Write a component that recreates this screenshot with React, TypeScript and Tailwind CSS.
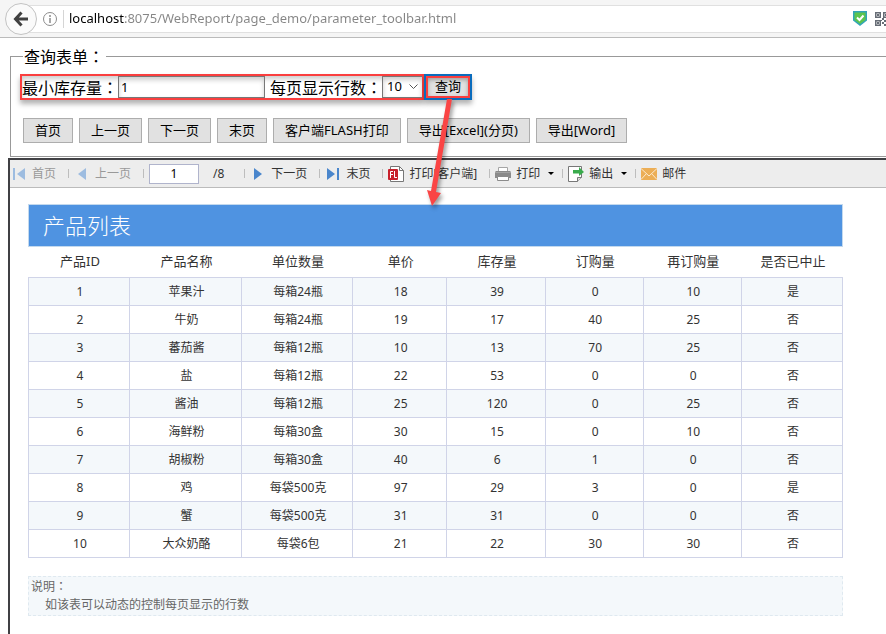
import React, { FC, ReactNode } from 'react';

const columns = [
    { name: '产品ID', width: 'w-[12.4%]' },
    { name: '产品名称', width: 'w-[13.8%]' },
    { name: '单位数量', width: 'w-[13.6%]' },
    { name: '单价', width: 'w-[11.6%]' },
    { name: '库存量', width: 'w-[12.1%]' },
    { name: '订购量', width: 'w-[12%]' },
    { name: '再订购量', width: 'w-[12.1%]' },
    { name: '是否已中止', width: 'w-[12.4%]' },
];

const products = [
    ['1', '苹果汁', '每箱24瓶', '18', '39', '0', '10', '是'],
    ['2', '牛奶', '每箱24瓶', '19', '17', '40', '25', '否'],
    ['3', '蕃茄酱', '每箱12瓶', '10', '13', '70', '25', '否'],
    ['4', '盐', '每箱12瓶', '22', '53', '0', '0', '否'],
    ['5', '酱油', '每箱12瓶', '25', '120', '0', '25', '否'],
    ['6', '海鲜粉', '每箱30盒', '30', '15', '0', '10', '否'],
    ['7', '胡椒粉', '每箱30盒', '40', '6', '1', '0', '否'],
    ['8', '鸡', '每袋500克', '97', '29', '3', '0', '是'],
    ['9', '蟹', '每袋500克', '31', '31', '0', '0', '否'],
    ['10', '大众奶酪', '每袋6包', '21', '22', '30', '30', '否'],
];

const actions = ['首页', '上一页', '下一页', '末页', '客户端FLASH打印', '导出[Excel](分页)', '导出[Word]'];

// The TC face centres the full-width colon in its box
const Colon = () => <span className="font-['Noto_Sans_CJK_TC',sans-serif]">：</span>;

const Caret = () => (
    <svg className="ml-2 h-[3px] w-[6px]" viewBox="0 0 6 3" fill="#000">
        <path d="M0 0h6L3 3z" />
    </svg>
);

const Separator = () => <span className="ml-3 mr-[5px] h-[9px] w-px shrink-0 bg-[#bdbdbd]" />;

const FirstIcon = () => (
    <svg width="16" height="16" viewBox="0 0 16 16" fill="#9dbce0">
        <path d="M2 2h2v12H2zM14 2v12L6 8z" />
    </svg>
);

const PrevIcon = () => (
    <svg width="16" height="16" viewBox="0 0 16 16" fill="#9dbce0">
        <path d="M12 2v12L4 8z" />
    </svg>
);

const NextIcon = () => (
    <svg width="16" height="16" viewBox="0 0 16 16" fill="#4a86cc">
        <path d="M4 2v12l8-6z" />
    </svg>
);

const LastIcon = () => (
    <svg width="16" height="16" viewBox="0 0 16 16" fill="#4a86cc">
        <path d="M2 2v12l8-6zM12 2h2v12h-2z" />
    </svg>
);

const FlashIcon = () => (
    <svg width="16" height="16" viewBox="0 0 16 16" fill="none">
        <path d="M2.5 4V.5h9l4 4v11h-13V13" fill="#fff" stroke="#777" />
        <path d="M11.5.5v4h4" stroke="#777" />
        <rect y="3" width="10" height="11" rx="1" fill="#c8202b" />
        <path d="M2.5 12V5.5H5M2.5 8.5H5M6.5 5v6.5H9" stroke="#fff" />
    </svg>
);

const PrinterIcon = () => (
    <svg width="16" height="16" viewBox="0 0 16 16" fill="none">
        <path d="M3.5 6V1.5h9V6" fill="#fff" stroke="#a5a5a5" />
        <path d="M1 5h14l1 1v6H0V6z" fill="#8b8b8b" />
        <path d="M0 6h16v1H0z" fill="#a3a3a3" />
        <path d="M2.5 10.5h11v4h-11z" fill="#fff" stroke="#8b8b8b" />
    </svg>
);

const ExportIcon = () => (
    <svg width="16" height="16" viewBox="0 0 16 16" fill="none">
        <path d="M.5.5h13v11l-4 4h-9z" fill="#fff" stroke="#777" />
        <path d="M9.5 15.5v-4h4" fill="#ddd" stroke="#777" />
        <path d="M5 4h6V1l5 5-5 4V7.5H5z" fill="#3aab4c" />
    </svg>
);

const MailIcon = () => (
    <svg width="16" height="16" viewBox="0 0 16 16" fill="none">
        <path d="M0 2h16v12H0z" fill="#ecae56" />
        <path d="M0 2.5 8 10l8-7.500M0 13.500l5.500-6M16 13.500l-5.500-6" stroke="#fbe9cd" />
    </svg>
);

interface ToolButtonProps {
    icon: ReactNode;
    children: ReactNode;
    disabled?: boolean;
    menu?: boolean;
}
const ToolButton: FC<ToolButtonProps> = ({ icon, children, disabled, menu }) => (
    <button
        type="button"
        disabled={disabled}
        className={[
            'flex shrink-0 items-center whitespace-nowrap text-[#333] disabled:text-[#999]',
            menu ? '-mr-1' : '',
        ].join(' ')}
    >
        <span className="mr-[5px]">{icon}</span>
        {children}
        {menu && <Caret />}
    </button>
);

const AddressBar = () => (
    <header className="flex h-[38px] items-center border-b border-[#bbb] bg-[#f5f5f5] pl-[5px]">
        <button
            type="button"
            aria-label="Back"
            className="z-10 flex h-8 w-8 shrink-0 items-center justify-center rounded-full border border-[#c3c3c3] bg-[#fafafa]"
        >
            <svg width="16" height="16" viewBox="0 0 16 16" fill="none" stroke="#404040" strokeWidth="3">
                <path d="M8.500 1.500 2.500 8l6 6.500M3 8h12" />
            </svg>
        </button>
        <div className="-ml-3 flex h-7 min-w-0 flex-1 items-center overflow-hidden border-y border-[#e0e0e0] bg-white pl-[18px]">
            <svg className="shrink-0" width="14" height="14" viewBox="0 0 14 14" fill="none" stroke="#8c8c8c">
                <circle cx="7" cy="7" r="6.500" />
                <path d="M7 6v5M7 3v2" strokeWidth="1.500" />
            </svg>
            <span className="ml-1.5 h-[18px] w-px shrink-0 bg-[#d5d5d5]" />
            {/* Host part is black, the rest of the address grey */}
            <input
                aria-label="Address"
                className="ml-[5px] min-w-0 flex-1 bg-[linear-gradient(90deg,#000_56px,#858585_56px)] bg-clip-text text-[13px] text-transparent outline-none"
                defaultValue="localhost:8075/WebReport/page_demo/parameter_toolbar.html"
            />
            <svg className="shrink-0" width="14" height="15" viewBox="0 0 14 15">
                <path d="M0 0h14v9.500L7 15 0 9.500z" fill="#31a5b8" />
                <path d="M1.500 1.500h11V9L7 13 1.500 9z" fill="#5cc44e" />
                <path d="m4 6.500 2.500 2.500L10.500 4.500" fill="none" stroke="#fff" strokeWidth="2" />
            </svg>
            <svg className="ml-2 shrink-0" width="11" height="14" viewBox="0 0 11 14" fill="none" stroke="#666c75">
                <path d="M.75.750h4.500v4.500H.750zM.75 8.750h4.500v4.500H.750zM8.750.750h4.500v4.500h-4.500z" strokeWidth="1.500" />
                <path
                    d="M2 2h2v2H2zM2 10h2v2H2zM10 2h1v2h-1zM7 6h2v2H7zM9 8h2v2H9zM7 10h2v2H7zM9 12h2v2H9zM6 8h1v1H6z"
                    fill="#666c75"
                    stroke="none"
                />
            </svg>
        </div>
    </header>
);

const QueryForm = () => (
    <fieldset className="ml-[10px] border border-r-0 border-[#999] pb-[13px] pl-[9px]">
        <legend className="ml-[3px] pl-px pr-0.5 text-base leading-5">
            查询表单
            <Colon />
        </legend>
        <div className="mt-[7px] flex items-center text-base">
            <div className="flex h-[26px] shrink-0 items-center whitespace-nowrap border-2 border-[#fa3e3e] shadow-[0_4px_5px_rgba(0,0,0,0.3),inset_0_3px_5px_rgba(0,0,0,0.2)]">
                <label htmlFor="stock">
                    最小库存量
                    <Colon />
                </label>
                <input
                    id="stock"
                    defaultValue="1"
                    className="h-[22px] w-[147px] border border-[#777] bg-white px-0.5 text-[13px] shadow-[inset_0_3px_5px_rgba(0,0,0,0.2)]"
                />
                <label htmlFor="rows" className="ml-[5px]">
                    每页显示行数
                    <Colon />
                </label>
                <div className="relative">
                    <select
                        id="rows"
                        defaultValue="10"
                        className="block h-[22px] w-10 appearance-none border border-r-0 border-[#777] bg-white pl-1 text-[13px] shadow-[inset_0_3px_5px_rgba(0,0,0,0.2)]"
                    >
                        <option>10</option>
                        <option>20</option>
                        <option>30</option>
                    </select>
                    <svg
                        className="pointer-events-none absolute right-1 top-2"
                        width="9"
                        height="6"
                        viewBox="0 0 9 6"
                        fill="none"
                        stroke="#555"
                    >
                        <path d="m.5.500 4 4 4-4" />
                    </svg>
                </div>
            </div>
            <button
                type="submit"
                className="h-[26px] shrink-0 border-2 border-[#0a6cbd] bg-[#e1e1e1] text-[13px] shadow-[0_4px_5px_rgba(0,0,0,0.3)]"
            >
                <span className="flex h-full items-center border-2 border-[#fa3e3e] px-[7px] shadow-[inset_0_2px_4px_rgba(0,0,0,0.3)]">
                    查询
                </span>
            </button>
        </div>
        <div className="mt-[18px] flex gap-[6px] pl-[3px]">
            {actions.map((a) => (
                <button
                    key={a}
                    type="button"
                    className="h-[25px] shrink-0 whitespace-nowrap border border-[#adadad] bg-[#e1e1e1] px-[11px] text-[13px]"
                >
                    {a}
                </button>
            ))}
        </div>
    </fieldset>
);

const Toolbar = () => (
    <div className="flex h-7 items-center overflow-hidden border-b border-[#bbb] bg-[#ededed] pl-px text-xs">
        <ToolButton icon={<FirstIcon />} disabled>
            首页
        </ToolButton>
        <Separator />
        <ToolButton icon={<PrevIcon />} disabled>
            上一页
        </ToolButton>
        <Separator />
        <input
            aria-label="页码"
            defaultValue="1"
            className="h-5 w-[50px] shrink-0 border border-[#b0b4cc] bg-white text-center"
        />
        <span className="ml-[14px] mr-2 text-[#333]">/8</span>
        <Separator />
        <ToolButton icon={<NextIcon />}>下一页</ToolButton>
        <Separator />
        <ToolButton icon={<LastIcon />}>末页</ToolButton>
        <Separator />
        <ToolButton icon={<FlashIcon />}>打印[客户端]</ToolButton>
        <Separator />
        <ToolButton icon={<PrinterIcon />} menu>
            打印
        </ToolButton>
        <Separator />
        <ToolButton icon={<ExportIcon />} menu>
            输出
        </ToolButton>
        <Separator />
        <ToolButton icon={<MailIcon />}>邮件</ToolButton>
    </div>
);

const Report = () => (
    <div className="pb-5 pl-[18px] pr-[43px] pt-4 text-[#333]">
        <h1 className="flex h-[43px] items-center border border-[#c3d9ee] bg-[#4f93e1] pl-[14px] text-[22px] font-light text-white">
            产品列表
        </h1>
        <table className="w-full table-fixed border-collapse text-center text-xs">
            <thead>
                <tr className="h-[30px] text-[13px]">
                    {columns.map((c) => (
                        <th key={c.name} className={`${c.width} pl-0.5 font-normal`}>
                            {c.name}
                        </th>
                    ))}
                </tr>
            </thead>
            <tbody>
                {products.map((row) => (
                    <tr key={row[0]} className="h-7 odd:bg-[#f4f8fb]">
                        {row.map((cell, i) => (
                            <td key={i} className="border border-[#d0d4e8] pl-0.5 pt-0.5">
                                {cell}
                            </td>
                        ))}
                    </tr>
                ))}
            </tbody>
        </table>
        <div className="mt-[18px] border border-dashed border-[#dfe9f0] bg-[#f4f8fb] pb-px pl-0.5 text-xs leading-[18px] text-[#666]">
            <p>
                说明
                <Colon />
            </p>
            <p className="pl-[14px]">如该表可以动态的控制每页显示的行数</p>
        </div>
    </div>
);

const App = () => (
    <div className="relative min-h-screen overflow-hidden bg-white font-['Noto_Sans','Noto_Sans_CJK_SC',sans-serif] text-black">
        <AddressBar />
        <main className="flex min-h-[calc(100vh-38px)] flex-col pt-2">
            <QueryForm />
            <section className="ml-2 mt-px flex-1 border-l-2 border-t-2 border-[#404044]">
                <Toolbar />
                <Report />
            </section>
        </main>

        {/* Pointer from the query button down to the report */}
        <svg
            className="pointer-events-none absolute left-[415px] top-[96px] drop-shadow-[2px_3px_2px_rgba(0,0,0,0.4)]"
            width="50"
            height="115"
            viewBox="0 0 50 115"
            fill="#fa4545"
        >
            <path d="M32 3h5L21 96l5 1-9 13-5-16 4 1z" />
        </svg>
    </div>
);

export default App;
